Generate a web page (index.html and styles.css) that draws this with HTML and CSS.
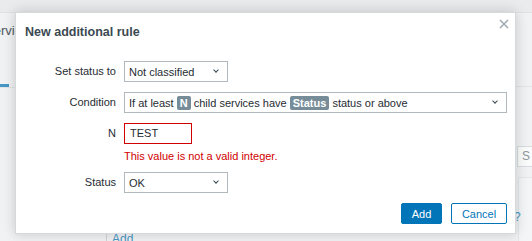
FILE: index.html
```html
<!DOCTYPE html>
<html lang="en">
<head>
    <meta charset="UTF-8">
    <meta name="viewport" content="width=device-width, initial-scale=1.0">
    <title>New additional rule</title>
    <link rel="stylesheet" href="styles.css">
</head>
<body>
    <!-- page behind the overlay -->
    <div class="page">
        <div class="page-top"></div>
        <div class="page-body">
            <div class="page-left">
                <div class="page-title">Services</div>
                <div class="tabs">
                    <span class="tab-active"></span>
                </div>
            </div>
            <div class="page-mid">
                <div class="tab-line"></div>
                <div class="add-row">
                    <span class="add-sep"></span>
                    <a href="#" class="add-link">Add</a>
                </div>
            </div>
            <div class="page-right">
                <div class="tab-line"></div>
                <div class="side-input">S</div>
                <div class="side-panel">
                    <span class="side-link">?</span>
                </div>
            </div>
        </div>
    </div>

    <div class="overlay-dialog">
        <div class="dialog-head">
            <h4>New additional rule</h4>
            <button class="btn-close" title="Close">
                <svg width="10" height="10" viewBox="0 0 10 10">
                    <path d="M1 1 L9 9 M9 1 L1 9" stroke="#a3adb3" stroke-width="1.6" fill="none"/>
                </svg>
            </button>
        </div>

        <form class="rule-form">
            <label class="form-label">Set status to</label>
            <div class="form-field">
                <div class="select w-short">
                    <span>Not classified</span>
                    <span class="chevron"></span>
                </div>
            </div>

            <label class="form-label">Condition</label>
            <div class="form-field">
                <div class="select w-long">
                    <span>If at least <span class="tag">N</span> child services have <span class="tag">Status</span> status or above</span>
                    <span class="chevron"></span>
                </div>
            </div>

            <label class="form-label">N</label>
            <div class="form-field">
                <div class="text-input has-error">TEST</div>
                <div class="error-msg">This value is not a valid integer.</div>
            </div>

            <label class="form-label">Status</label>
            <div class="form-field">
                <div class="select w-short">
                    <span>OK</span>
                    <span class="chevron"></span>
                </div>
            </div>
        </form>

        <div class="dialog-foot">
            <button class="btn-primary">Add</button>
            <button class="btn-alt">Cancel</button>
        </div>
    </div>
</body>
</html>
```

FILE: styles.css
```css
body {
    font-family: Arial, "Liberation Sans", sans-serif;
    font-size: 11px;
    color: #1f2c33;
    margin: 0;
    padding: 0;
    background-color: #f1f2f3;
    overflow: hidden;
}

/* background page */
.page-top {
    height: 12px;
    background-color: #e9ebec;
    border-bottom: 1px solid #dfe3e5;
}

.page-body {
    display: flex;
    height: 228px;
}

.page-left {
    width: 15px;
    overflow: hidden;
}

.page-title {
    margin: 10px 0 0 -15px;
    font-size: 13px;
    color: #4f5b62;
    white-space: nowrap;
}

.tabs {
    margin-top: 46px;
    border-bottom: 1px solid #e1e5e7;
    height: 3px;
}

.tab-active {
    display: block;
    width: 9px;
    height: 3px;
    background-color: #4796c4;
}

.page-mid {
    flex-grow: 1;
}

.tab-line {
    margin-top: 73px;
    border-bottom: 1px solid #e1e5e7;
}

.add-row {
    display: flex;
    align-items: flex-start;
    margin: 145px 0 0 91px;
}

.add-sep {
    width: 1px;
    height: 14px;
    background-color: #d0d6d9;
    margin-right: 5px;
}

.add-link {
    color: #4796c4;
    text-decoration: none;
    font-size: 12px;
    line-height: 14px;
}

.page-right {
    width: 16px;
    overflow: hidden;
}

.side-input {
    margin: 59px 0 0 1px;
    height: 19px;
    width: 30px;
    border: 1px solid #d6dcdf;
    background-color: #fafbfb;
    color: #8c969b;
    padding-left: 4px;
    line-height: 19px;
    font-size: 12px;
}

.side-panel {
    margin: 10px 0 0 2px;
    height: 80px;
    border-top: 1px solid #e3e7e9;
    border-left: 1px solid #e3e7e9;
    background-color: #f4f5f6;
}

.side-link {
    display: block;
    margin: 32px 0 0 -5px;
    color: #4796c4;
    font-size: 12px;
}

/* dialog */
.overlay-dialog {
    position: absolute;
    left: 15px;
    top: 12px;
    width: 499px;
    height: 220px;
    background-color: #ffffff;
    border: 1px solid #d4d9dc;
    box-shadow: 0 0 12px rgba(0, 0, 0, 0.18);
    display: flex;
    flex-direction: column;
}

.dialog-head {
    position: relative;
    padding: 11px 10px 0 9px;
}

.dialog-head h4 {
    margin: 0;
    font-size: 12.5px;
    line-height: 16px;
    font-weight: bold;
    color: #3b4a52;
}

.btn-close {
    position: absolute;
    top: 3px;
    right: 3px;
    width: 16px;
    height: 16px;
    padding: 0;
    border: none;
    background: none;
    display: flex;
    align-items: center;
    justify-content: center;
}

.rule-form {
    display: grid;
    grid-template-columns: 100px 1fr;
    column-gap: 8px;
    row-gap: 10px;
    margin-top: 21px;
    padding-right: 8px;
}

.form-label {
    text-align: right;
    line-height: 21px;
    height: 21px;
}

.select {
    box-sizing: border-box;
    height: 21px;
    border: 1px solid #b0b9be;
    display: flex;
    align-items: center;
    justify-content: space-between;
    padding: 0 9px 0 4px;
    white-space: nowrap;
}

.w-short {
    width: 104px;
}

.w-long {
    width: 100%;
}

.chevron {
    width: 3px;
    height: 3px;
    border-right: 1.5px solid #3b4a52;
    border-bottom: 1.5px solid #3b4a52;
    transform: rotate(45deg);
    margin-top: -3px;
}

.tag {
    display: inline-block;
    background-color: #768d99;
    color: #ffffff;
    font-weight: bold;
    padding: 0 3px;
    border-radius: 2px;
    line-height: 14px;
}

.text-input {
    box-sizing: border-box;
    width: 68px;
    height: 21px;
    line-height: 19px;
    padding: 0 5px;
    border: 1px solid #b0b9be;
}

.has-error {
    border-color: #d00000;
}

.error-msg {
    color: #d00000;
    margin-top: 4px;
    line-height: 16px;
    margin-bottom: -2px;
}

.dialog-foot {
    margin-top: auto;
    display: flex;
    justify-content: flex-end;
    gap: 9px;
    padding: 0 8px 9px 0;
}

.dialog-foot button {
    font-family: Arial, "Liberation Sans", sans-serif;
    font-size: 11px;
    height: 21px;
    border-radius: 2px;
    padding: 0 6px;
    cursor: pointer;
}

.btn-primary {
    background-color: #0275b8;
    border: 1px solid #0275b8;
    color: #ffffff;
    width: 41px;
}

.btn-alt {
    background-color: #ffffff;
    border: 1px solid #0275b8;
    color: #0275b8;
    width: 56px;
}
```
